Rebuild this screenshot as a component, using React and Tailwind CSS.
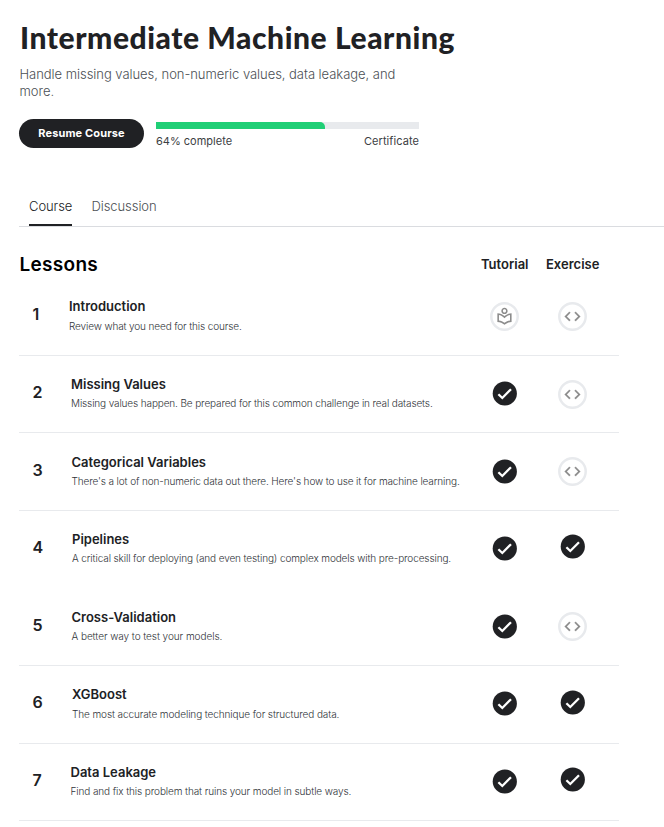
const lessons = [
  { title: "Introduction", text: "Review what you need for this course.", row: "h-[78px] border-b", number: "pt-[26px]", copy: "pl-[50px] pt-[18px]", desc: "leading-5 tracking-[-0.128px]", tutorial: "book", exercise: "code", first: "pt-6", second: "pt-6" },
  { title: "Missing Values", text: "Missing values happen. Be prepared for this common challenge in real datasets.", row: "h-[77px] border-b", number: "pt-[26px]", copy: "pl-[52px] pt-[18px]", desc: "leading-[18px] tracking-[-0.128px]", tutorial: "check", exercise: "code", first: "pt-[23px]", second: "pt-6" },
  { title: "Categorical Variables", text: "There's a lot of non-numeric data out there. Here's how to use it for machine learning.", row: "h-[78px] border-b", number: "pt-[27px]", copy: "pl-[52.5px] pt-[19px]", desc: "leading-[18px] tracking-[-0.128px]", tutorial: "check", exercise: "code", first: "pt-6", second: "pt-6" },
  { title: "Pipelines", text: "A critical skill for deploying (and even testing) complex models with pre-processing.", row: "h-[77px]", number: "pt-[26px]", copy: "pl-[53px] pt-[18px]", desc: "leading-[18px] tracking-[-0.115px]", tutorial: "check", exercise: "check", first: "pt-[23px]", second: "pt-[21px]" },
  { title: "Cross-Validation", text: "A better way to test your models.", row: "h-[78px] border-b", number: "pt-[27px]", copy: "pl-[52.5px] pt-[19px]", desc: "leading-[18px] tracking-[-0.06px]", tutorial: "check", exercise: "code", first: "pt-6", second: "pt-6" },
  { title: "XGBoost", text: "The most accurate modeling technique for structured data.", row: "h-[78px] border-b", number: "pt-[26px]", copy: "pl-[53px] pt-[18px]", desc: "leading-5 tracking-[-0.1px]", tutorial: "check", exercise: "check", first: "pt-[23px]", second: "pt-[22px]" },
  { title: "Data Leakage", text: "Find and fix this problem that ruins your model in subtle ways.", row: "h-[77px] border-b", number: "pt-[26px]", copy: "pl-[51.5px] pt-[18px]", desc: "leading-[18px] tracking-[-0.105px]", tutorial: "check", exercise: "check", first: "pt-[23px]", second: "pt-[21px]" },
];

function Status({ kind }) {
  if (kind === "check") {
    return (
      <svg className="block size-[29px]" viewBox="0 0 29 29" fill="none">
        <circle cx="14.8" cy="14.5" r="12.1" fill="#202124" />
        <path d="M8.4 15.2L12.3 19L21 10.2" stroke="#fff" strokeWidth="2.3" />
      </svg>
    );
  }
  return (
    <svg className="block size-[29px]" viewBox="0 0 29 29">
      <circle cx="14.5" cy="14.5" r="13.2" fill="none" stroke="#e8eaed" strokeWidth="2.5" />
      <g transform="translate(5 5) scale(0.79)" fill="#8c8c8c">
        {kind === "book" ? (
          <path d="M16 5c0-2.21-1.79-4-4-4S8 2.79 8 5s1.79 4 4 4 4-1.79 4-4zm-4 2c-1.1 0-2-.9-2-2s.9-2 2-2 2 .9 2 2-.9 2-2 2zm0 4.55C9.64 9.35 6.48 8 3 8v11c3.48 0 6.64 1.35 9 3.55 2.36-2.19 5.52-3.55 9-3.55V8c-3.48 0-6.64 1.35-9 3.55zm7 5.58c-2.53.34-4.93 1.3-7 2.82-2.06-1.52-4.47-2.49-7-2.83v-6.95c2.1.38 4.05 1.35 5.64 2.83L12 14.28l1.36-1.27c1.59-1.48 3.54-2.45 5.64-2.83v6.95z" />
        ) : (
          <path d="M9.4 16.6L4.8 12l4.6-4.6L8 6l-6 6 6 6 1.4-1.4zm5.2 0l4.6-4.6-4.6-4.6L16 6l6 6-6 6-1.4-1.4z" stroke="#8c8c8c" strokeWidth="0.3" />
        )}
      </g>
    </svg>
  );
}

export default function App() {
  return (
    <main className="h-[827px] w-full overflow-hidden bg-white pl-[19px] font-['Inter',sans-serif] text-[#202124]">
      <header className="h-[187px] pt-[19px]">
        <h1 className="pl-px font-['Lato',sans-serif] text-[30px] leading-9 font-black tracking-[0.56px] whitespace-nowrap">Intermediate Machine Learning</h1>
        <p className="mt-[11px] w-[400px] pl-[0.5px] text-[13px] leading-[17px] font-light tracking-[-0.04px] text-[#4b4f54]">
          Handle missing values, non-numeric values, data leakage, and<br />more.
        </p>
        <div className="mt-[19px] flex">
          <button className="h-[29px] w-[125px] rounded-full bg-[#202124] text-[11px] leading-[29px] font-bold tracking-[0.13px] text-white">Resume Course</button>
          <div className="ml-3 w-[263px] pt-[3px]">
            <div className="h-[7px] bg-[#e8eaed]">
              <div className="h-[7px] w-[169px] rounded-tr-[5px] bg-[#20cf76]" />
            </div>
            <div className="mt-1 flex justify-between text-[11px] leading-4 text-[#3c4043]">
              <span>64% complete</span>
              <span className="tracking-[0.08px]">Certificate</span>
            </div>
          </div>
        </div>
      </header>

      <nav className="flex h-10 gap-[19.5px] border-b border-[#dadce0] pl-2.5 text-[13px] leading-[38px] font-light tracking-[-0.08px]">
        <span className="h-[39px] w-[43px] border-b-2 border-[#202124] whitespace-nowrap">Course</span>
        <span className="text-[#4b4f54]">Discussion</span>
      </nav>

      <section className="w-[600px]">
        <div className="flex h-[51px] items-start pt-[25px] font-semibold">
          <h2 className="w-[452px] pl-[0.5px] text-[19px] leading-[26px] tracking-[0.3px] text-black">Lessons</h2>
          <span className="w-[68px] pl-[10px] text-[13px] leading-6">Tutorial</span>
          <span className="pl-[7px] text-[13px] leading-6">Exercise</span>
        </div>
        {lessons.map((lesson, index) => (
          <article key={lesson.title} className={`flex border-[#e8eaed] ${lesson.row}`}>
            <div className="w-0">
              <span className={`block pl-[13.5px] text-[16px] leading-5 font-semibold ${lesson.number}`}>{index + 1}</span>
            </div>
            <div className={`w-[452px] shrink-0 whitespace-nowrap ${lesson.copy}`}>
              <h3 className="text-[13px] leading-5 font-semibold">{lesson.title}</h3>
              <p className={`text-[10px] font-light text-[#303338] ${lesson.desc}`}>{lesson.text}</p>
            </div>
            <div className={`w-[68px] pl-[19px] ${lesson.first}`}><Status kind={lesson.tutorial} /></div>
            <div className={`pl-[19px] ${lesson.second}`}><Status kind={lesson.exercise} /></div>
          </article>
        ))}
      </section>
    </main>
  );
}
